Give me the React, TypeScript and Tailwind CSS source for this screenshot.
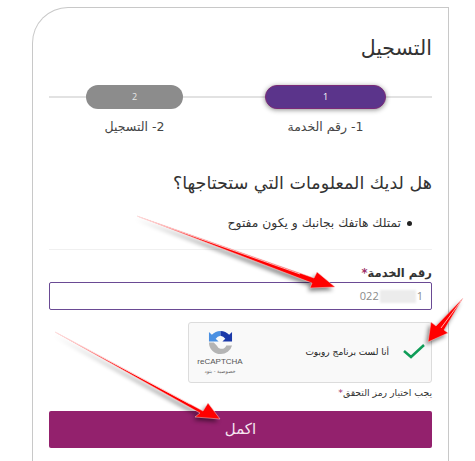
import React from "react";

const arabic = "font-['DejaVu_Sans','Noto_Sans',sans-serif]";

function Arrow({ points, shaft }: { points: string; shaft: string }) {
  return (
    <g>
      <polygon points={points} fill="#000" opacity="0.5" transform="translate(-2 3)" style={{ filter: "blur(2px)" }} />
      <polygon points={points} fill="#ff0000" stroke="#f8d0d0" strokeWidth="0.5" />
      <polyline points={shaft} fill="none" stroke="#ffd8d8" strokeWidth="0.8" />
    </g>
  );
}

function RecaptchaLogo() {
  return (
    <svg width="25" height="25" viewBox="0 0 26 26">
      <path d="M13 1a12 12 0 0 0-9 4L1 2v10h10L8 9a7 7 0 0 1 5-3V1z" fill="#4a90e2" />
      <path d="M13 1a12 12 0 0 1 9 4l3-3v10H15l3-3a7 7 0 0 0-5-3V1z" fill="#1c3aa9" />
      <path d="M1 13h5l3 3a7 7 0 0 0 4 3.500c3 .5 5-1 6-3.500h6a12 12 0 0 1-12 9A12 12 0 0 1 1 13z" fill="#b4b4b4" />
    </svg>
  );
}

export default function App() {
  return (
    <div dir="rtl" className={`relative h-[461px] w-[475px] overflow-hidden bg-white ${arabic}`}>
      <div className="ml-[32px] mr-[26px] mt-[7px] h-[470px] rounded-tl-[36px] border-t border-r border-l border-[#c8c8c8] px-4 pt-[25px]">
        <h2 className="text-[20.5px] leading-[30px] text-[#333]">التسجيل</h2>

        {/* Steps */}
        <div className="relative mt-[22px]">
          <div className="absolute inset-x-0 top-[11px] h-[2px] bg-[#e2e2e2]" />
          <div className="relative flex pr-[46px]">
            <div className="flex w-[121px] flex-col items-center">
              <div className="flex h-[24px] w-full items-center justify-center rounded-full border border-[#7a2a78] bg-[#5b348b] font-['Open_Sans',sans-serif] text-[9px] text-white shadow-[0_1px_5px_rgba(0,0,0,0.45)]">1</div>
              <div className="mt-[9px] whitespace-nowrap text-[12.5px] leading-[17px] text-[#444]">1- رقم الخدمة</div>
            </div>
            <div className="mr-[82px] flex w-[97px] flex-col items-center">
              <div className="flex h-[24px] w-full items-center justify-center rounded-full bg-[#8c8c8c] font-['Open_Sans',sans-serif] text-[9px] text-[#e8e8e8]">2</div>
              <div className="mt-[9px] whitespace-nowrap text-[12.5px] leading-[17px] text-[#444]">2- التسجيل</div>
            </div>
          </div>
        </div>

        <h3 className="mt-[35px] text-[17.5px] leading-[26px] text-[#333]">هل لديك المعلومات التي ستحتاجها؟</h3>

        <ul className="mt-[17px] pr-[20px] text-[12.3px] leading-[20px] text-[#333]">
          <li className="flex items-center gap-[6px]">
            <span className="h-[5px] w-[5px] rounded-full bg-[#222]" />
            <span>تمتلك هاتفك بجانبك و يكون مفتوح</span>
          </li>
        </ul>

        <div className="mt-[16px] h-px bg-[#f0f0f0]" />

        <label className="mt-[15px] block text-[11.5px] font-bold leading-[16px] text-[#333]">
          رقم الخدمة<span className="text-[#a0306a]">*</span>
        </label>
        <div className="mt-[1px] flex h-[28px] items-center rounded-[2px] border border-[#6a4a94] px-[8px] font-['Open_Sans',sans-serif] text-[11px] text-[#8a8a8a]" dir="ltr">
          <div className="ml-auto flex items-center">
            <span>022</span>
            <span className="mx-px h-[13px] w-[36px] bg-[#ececec] blur-[1px]" />
            <span>1</span>
          </div>
        </div>

        {/* Captcha */}
        <div className="mt-[12px] flex h-[61px] w-[244px] items-center rounded-[3px] border border-[#dcdcdc] bg-[#f9f9f9] pl-[8px] pr-[5px]">
          <svg width="24" height="16" viewBox="0 0 24 16" className="mb-[3px] shrink-0">
            <path d="M2 8l7 6L22 2" fill="none" stroke="#0f9d58" strokeWidth="2.500" />
          </svg>
          <span className="mr-[13px] whitespace-nowrap text-[9px] text-[#222]">أنا لست برنامج روبوت</span>
          <div className="mr-auto flex w-[46px] flex-col items-center" dir="ltr">
            <RecaptchaLogo />
            <span className="mt-[2px] font-['Liberation_Sans',sans-serif] text-[8px] leading-[10px] text-[#555]">reCAPTCHA</span>
            <span dir="rtl" className="whitespace-nowrap text-[5px] leading-[8px] text-[#666]">خصوصية - بنود</span>
          </div>
        </div>

        <div className="mt-[2px] text-[9.300px] leading-[15px] text-[#333]">يجب اختيار رمز التحقق<span className="text-[#a0306a]">*</span></div>

        <button className="mt-[11px] flex h-[37px] w-full items-center justify-center rounded-[2px] bg-[#93216d] text-[15px] text-[#f5e6f0]">اكمل</button>
      </div>

      {/* annotation arrows drawn over the screenshot */}
      <svg className="pointer-events-none absolute left-0 top-0" width="475" height="461" viewBox="0 0 475 461">
        <Arrow points="137,216 314,278 317,272 335,287 310,288 312,283" shaft="139,217 300,274" />
        <Arrow points="55,332 203,411 208,403 220,419 195,417 200,413" shaft="57,333 190,404" />
        <Arrow points="463,298 444,330 448,333 428,342 431,322 436,326" shaft="461,301 441,328" />
      </svg>
    </div>
  );
}
